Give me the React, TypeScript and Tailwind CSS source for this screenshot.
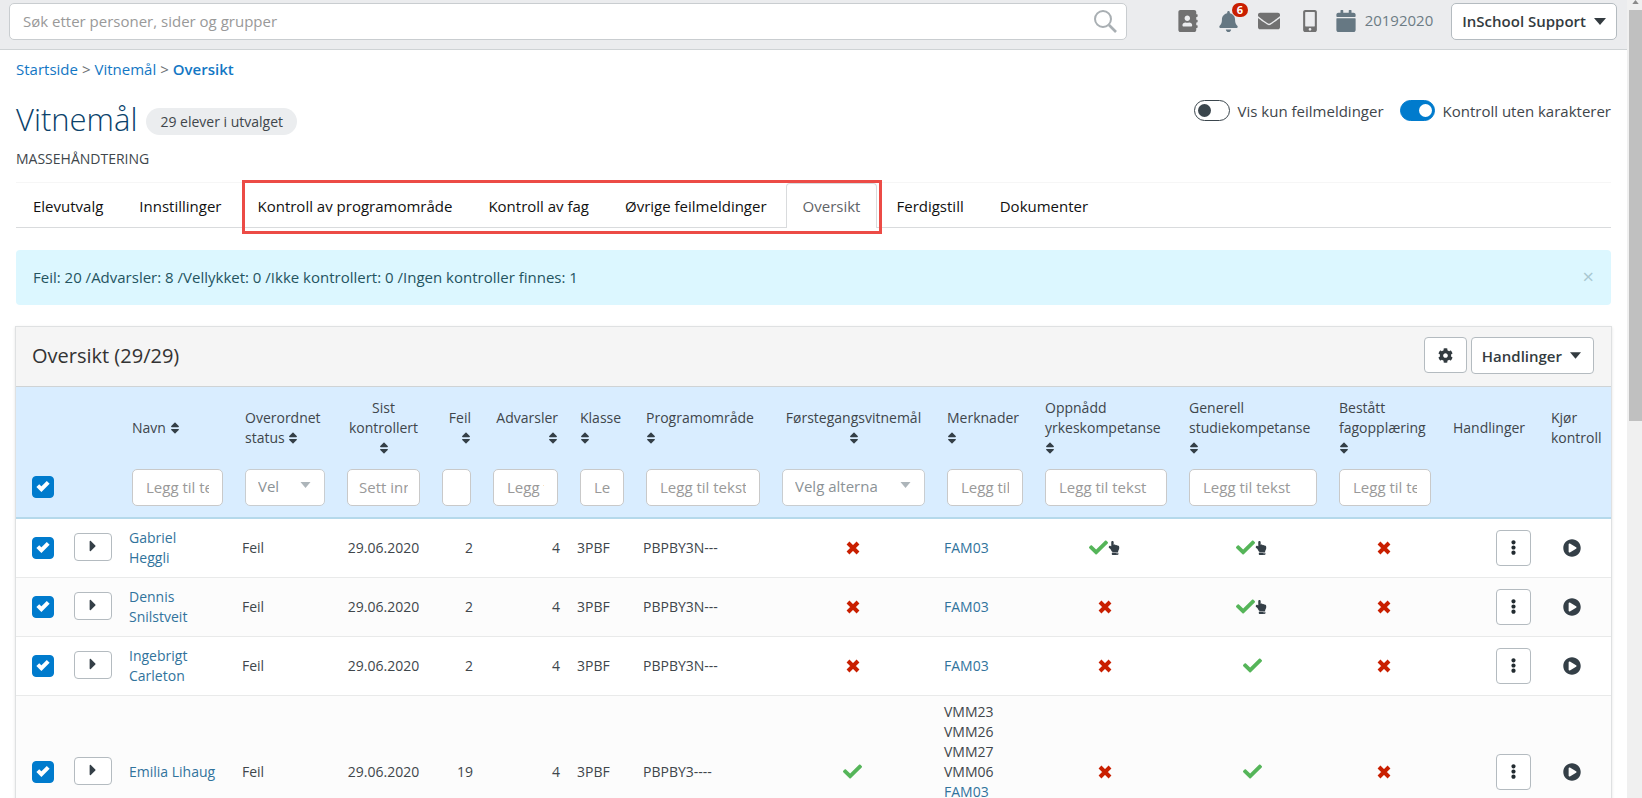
import { useState } from "react";
import type { ReactNode } from "react";
import {
  FaAddressBook,
  FaBell,
  FaCalendar,
  FaCaretRight,
  FaCheck,
  FaCog,
  FaEllipsisV,
  FaEnvelope,
  FaHandPointUp,
  FaMobileAlt,
  FaPlayCircle,
  FaSort,
} from "react-icons/fa";

type Mark = "no" | "yes" | "manual";
type Align = "left" | "center" | "right";

interface Pupil {
  name: string;
  errors: number;
  warnings: number;
  group: string;
  programme: string;
  first: Mark;
  notes: { code: string; link?: boolean }[];
  vocational: Mark;
  general: Mark;
  trade: Mark;
}

const pupils: Pupil[] = [
  { name: "Gabriel Heggli", errors: 2, warnings: 4, group: "3PBF", programme: "PBPBY3N---", first: "no", notes: [{ code: "FAM03", link: true }], vocational: "manual", general: "manual", trade: "no" },
  { name: "Dennis Snilstveit", errors: 2, warnings: 4, group: "3PBF", programme: "PBPBY3N---", first: "no", notes: [{ code: "FAM03", link: true }], vocational: "no", general: "manual", trade: "no" },
  { name: "Ingebrigt Carleton", errors: 2, warnings: 4, group: "3PBF", programme: "PBPBY3N---", first: "no", notes: [{ code: "FAM03", link: true }], vocational: "no", general: "yes", trade: "no" },
  {
    name: "Emilia Lihaug",
    errors: 19,
    warnings: 4,
    group: "3PBF",
    programme: "PBPBY3----",
    first: "yes",
    notes: [
      { code: "VMM23" },
      { code: "VMM26" },
      { code: "VMM27" },
      { code: "VMM06" },
      { code: "FAM03", link: true },
    ],
    vocational: "no",
    general: "yes",
    trade: "no",
  },
];

interface Column {
  label: string;
  width: string;
  align: Align;
  sort?: "inline" | "below";
  filter?: "text" | "select";
  hint?: string;
  pad?: string;
}

const columns: Column[] = [
  { label: "Navn", width: "w-[113px]", align: "left", sort: "inline", filter: "text", hint: "Legg til tekst", pad: "px-[13px]" },
  { label: "Overordnet status", width: "w-[102px]", align: "left", sort: "inline", filter: "select", hint: "Vel" },
  { label: "Sist kontrollert", width: "w-[95px]", align: "center", sort: "below", filter: "text", hint: "Sett inn", pad: "px-[11px]" },
  { label: "Feil", width: "w-[51px]", align: "right", sort: "below", filter: "text", hint: "", pad: "px-[13px]" },
  { label: "Advarsler", width: "w-[87px]", align: "right", sort: "below", filter: "text", hint: "Legg til", pad: "px-[13px]" },
  { label: "Klasse", width: "w-[66px]", align: "left", sort: "below", filter: "text", hint: "Legg", pad: "px-[13px]" },
  { label: "Programområde", width: "w-[136px]", align: "left", sort: "below", filter: "text", hint: "Legg til tekst", pad: "px-[13px]" },
  { label: "Førstegangsvitnemål", width: "w-[165px]", align: "center", sort: "below", filter: "select", hint: "Velg alterna" },
  { label: "Merknader", width: "w-[98px]", align: "left", sort: "below", filter: "text", hint: "Legg til", pad: "px-[13px]" },
  { label: "Oppnådd yrkeskompetanse", width: "w-[144px]", align: "left", sort: "below", filter: "text", hint: "Legg til tekst", pad: "px-[13px]" },
  { label: "Generell studiekompetanse", width: "w-[150px]", align: "left", sort: "below", filter: "text", hint: "Legg til tekst", pad: "px-[13px]" },
  { label: "Bestått fagopplæring", width: "w-[114px]", align: "left", sort: "below", filter: "text", hint: "Legg til tekst", pad: "px-[13px]" },
  { label: "Handlinger", width: "w-[98px]", align: "left" },
  { label: "Kjør kontroll", width: "w-[71px]", align: "left" },
];

const alignClass: Record<Align, string> = {
  left: "text-left",
  center: "text-center",
  right: "text-right",
};

function MarkIcon({ mark }: { mark: Mark }) {
  if (mark === "no") {
    return (
      <svg viewBox="0 0 14 14" role="img" aria-label="Nei" className="mx-auto size-[14px]">
        <path d="M2 2l10 10M12 2L2 12" stroke="#c91f00" strokeWidth="4" fill="none" />
      </svg>
    );
  }
  return (
    <span className="flex items-center justify-center">
      <FaCheck aria-label="Ja" className="size-[19px] text-[#55b559]" />
      {mark === "manual" && <FaHandPointUp aria-label="Manuelt satt" className="size-[14px] -ml-px text-[#343f47]" />}
    </span>
  );
}

function Tick({ label }: { label: string }) {
  const [on, setOn] = useState(true);
  return (
    <label className="relative ml-4 block size-[22px]">
      <input
        type="checkbox"
        aria-label={label}
        checked={on}
        onChange={() => setOn(!on)}
        className="peer block size-[22px] appearance-none rounded-sm border border-[#007bcd] bg-white checked:bg-[#007bcd]"
      />
      <svg viewBox="0 0 14 12" className="pointer-events-none absolute top-1 left-1 hidden h-3 w-[14px] peer-checked:block">
        <path d="M1.8 5.6l3.6 3.6L12.2 2.4" stroke="#fff" strokeWidth="4" fill="none" />
      </svg>
    </label>
  );
}

function Toggle({ label, initial }: { label: string; initial: boolean }) {
  const [on, setOn] = useState(initial);
  return (
    <label className="flex items-center gap-2">
      <input type="checkbox" role="switch" checked={on} onChange={() => setOn(!on)} className="peer sr-only" />
      <span
        className={
          on
            ? "flex h-[21px] w-[35px] items-center justify-end rounded-full border border-[#007bcd] bg-[#007bcd] px-[2px]"
            : "flex h-[21px] w-9 items-center rounded-full border border-[#3b464d] bg-white px-[3px]"
        }
      >
        <span className={on ? "size-[13px] rounded-full bg-white" : "size-[13px] rounded-full bg-[#3b464d]"} />
      </span>
      <span>{label}</span>
    </label>
  );
}

function Tab({ label, active }: { label: string; active?: boolean }) {
  return (
    <a
      href="#"
      className={
        active
          ? "-mb-px mr-[2px] flex h-[45px] items-center rounded-t border border-b-0 border-[#d9dbdd] bg-white px-4 text-[#5f6468]"
          : "mr-[2px] flex h-11 items-center border-x border-transparent px-4 pt-px text-[#111]"
      }
    >
      {label}
    </a>
  );
}

function Filter({ column }: { column: Column }) {
  if (column.filter === "select") {
    return (
      <span className="relative block">
        <select
          aria-label={column.label}
          className="block h-[37px] w-full appearance-none rounded-[5px] border border-[#c9cdd0] bg-white pr-10 pb-[3px] pl-3 text-[15px] text-[#8b9296]"
        >
          <option>{column.hint}</option>
        </select>
        <svg viewBox="0 0 10 6" className="pointer-events-none absolute top-[13px] right-[14px] h-[6px] w-[11px] text-[#adb5ba]">
          <path d="M0 0h10L5 6z" fill="currentColor" />
        </svg>
      </span>
    );
  }
  return (
    <input
      type="text"
      aria-label={column.label}
      placeholder={column.hint}
      className={`block h-[37px] w-full rounded-[5px] border border-[#c9c9c9] bg-white pb-[2px] text-[15px] placeholder:text-[#999] ${column.pad}`}
    />
  );
}

function HeaderIcon({ label, children }: { label: string; children: ReactNode }) {
  return (
    <button type="button" aria-label={label} className="relative flex items-center">
      {children}
    </button>
  );
}

export default function App() {
  return (
    <div className="flex h-screen overflow-hidden bg-white font-['Open_Sans',sans-serif] text-[14px] leading-5 text-[#40464b]">
      <div className="min-w-0 flex-1 overflow-hidden">
        <header className="flex h-[50px] items-start border-b border-[#cfd3d5] bg-[#ebecee] pt-[3px] pr-[10px] pl-[9px]">
          <div className="relative w-[1118px]">
            <input
              type="search"
              aria-label="Søk"
              placeholder="Søk etter personer, sider og grupper"
              className="block h-[37px] w-full rounded-[5px] border border-[#c9cdd0] bg-white pr-12 pb-[2px] pl-[13px] text-[15px] placeholder:text-[#999]"
            />
            <svg viewBox="0 0 24 24" fill="none" stroke="#a9afb3" strokeWidth="2" className="absolute top-[6px] right-[10px] size-6">
              <circle cx="10" cy="10" r="8" />
              <path d="M16 16l7 7" strokeWidth="2.6" />
            </svg>
          </div>
          <div className="flex h-9 flex-1 items-center justify-end text-[#717171]">
            <div className="flex items-center gap-[19px]">
              <HeaderIcon label="Kontakter">
                <FaAddressBook className="size-[22px]" />
              </HeaderIcon>
              <HeaderIcon label="Varsler">
                <FaBell className="size-[21px] text-[#667883]" />
                <span className="absolute -top-[8px] left-[14px] rounded-full bg-[#c91f00] px-[5px] text-[11px] leading-[14px] font-bold text-white">
                  6
                </span>
              </HeaderIcon>
              <HeaderIcon label="Meldinger">
                <FaEnvelope className="size-[22px]" />
              </HeaderIcon>
              <HeaderIcon label="Mobil">
                <FaMobileAlt className="size-[22px]" />
              </HeaderIcon>
            </div>
            <button type="button" className="ml-[14px] flex items-center gap-2 text-[15px] font-medium text-[#6d7c85]">
              <FaCalendar className="size-[22px] text-[#667883]" />
              <span className="pb-[2px]">20192020</span>
            </button>
          </div>
          <button
            type="button"
            className="ml-[18px] flex h-[37px] items-center gap-2 rounded-[5px] border border-[#b4bbc0] bg-white px-[10px] pb-px text-[15px] font-semibold text-[#333b40]"
          >
            InSchool Support
            <svg viewBox="0 0 12 7" className="h-[7px] w-3">
              <path d="M0 0h12L6 7z" fill="currentColor" />
            </svg>
          </button>
        </header>

        <main className="px-4">
          <nav aria-label="Brødsmuler" className="mt-[9px] flex gap-1 text-[15px] leading-5 text-[#1377c4]">
            <a href="#">Startside</a>
            <span className="text-[#6b7074]">&gt;</span>
            <a href="#">Vitnemål</a>
            <span className="text-[#6b7074]">&gt;</span>
            <a href="#" className="font-semibold">
              Oversikt
            </a>
          </nav>

          <div className="mt-5 flex items-start justify-between">
            <div className="flex items-center">
              <h1 className="text-[31px] leading-10 font-light text-[#0b426b]">Vitnemål</h1>
              <span className="mt-1 ml-[9px] rounded-full bg-[#ebedef] px-[14px] text-[14px] leading-[27px]">29 elever i utvalget</span>
            </div>
            <div className="mt-px flex items-center gap-4 text-[15px] leading-5">
              <Toggle label="Vis kun feilmeldinger" initial={false} />
              <Toggle label="Kontroll uten karakterer" initial />
            </div>
          </div>
          <p className="mt-[10px]">MASSEHÅNDTERING</p>

          <nav
            aria-label="Steg"
            className="mt-[13px] flex h-[46px] items-end border-t border-b border-t-[#f6f6f6] border-b-[#d9dbdd] text-[15px] leading-5"
          >
            <Tab label="Elevutvalg" />
            <Tab label="Innstillinger" />
            <div className="relative flex">
              <Tab label="Kontroll av programområde" />
              <Tab label="Kontroll av fag" />
              <Tab label="Øvrige feilmeldinger" />
              <Tab label="Oversikt" active />
              <div className="pointer-events-none absolute -top-[3px] -right-[3px] -bottom-[7px] left-[2px] border-[3px] border-[#ec4b46]" />
            </div>
            <Tab label="Ferdigstill" />
            <Tab label="Dokumenter" />
          </nav>

          <div
            role="status"
            className="mt-[22px] flex h-[55px] items-center justify-between rounded bg-[#dcf7ff] px-[17px] pb-[2px] text-[15px] leading-5 text-[#24545f]"
          >
            <span>Feil: 20 /Advarsler: 8 /Vellykket: 0 /Ikke kontrollert: 0 /Ingen kontroller finnes: 1</span>
            <button type="button" aria-label="Lukk" className="text-[20px] text-[#a9c8d1]">
              ×
            </button>
          </div>

          <section className="mt-[21px] -mx-px border border-[#dfe1e2] shadow-sm">
            <div className="flex h-[60px] items-center justify-between border-b border-[#cfd3d5] bg-[#f5f5f5] pr-[17px] pb-[2px] pl-4">
              <h2 className="text-[20px] text-[#333]">Oversikt (29/29)</h2>
              <div className="flex items-start gap-1">
                <button
                  type="button"
                  aria-label="Innstillinger"
                  className="flex h-9 w-[43px] items-center justify-center rounded border border-[#b4bbc0] bg-white text-[#333b40]"
                >
                  <FaCog className="size-[15px]" />
                </button>
                <button
                  type="button"
                  className="flex h-[37px] items-center gap-2 rounded border border-[#b4bbc0] bg-white pr-3 pl-[10px] text-[15px] font-semibold text-[#333b40]"
                >
                  Handlinger
                  <svg viewBox="0 0 12 7" className="h-[7px] w-[11px]">
                    <path d="M0 0h12L6 7z" fill="currentColor" />
                  </svg>
                </button>
              </div>
            </div>

            <table className="w-full table-fixed border-collapse">
              <colgroup>
                <col className="w-[51px]" />
                <col className="w-[54px]" />
                {columns.map((c) => (
                  <col key={c.label} className={c.width} />
                ))}
              </colgroup>
              <thead className="bg-[#d9edff]">
                <tr>
                  <td />
                  <td />
                  {columns.map((c) => (
                    <th key={c.label} scope="col" className={`px-[11px] py-[11px] align-middle font-normal ${alignClass[c.align]}`}>
                      {c.label}
                      {c.sort === "below" && <br />}
                      {c.sort === "inline" && " "}
                      {c.sort && <FaSort className="-mx-[2px] inline size-[14px] align-[-2px] text-[#343f47]" />}
                    </th>
                  ))}
                </tr>
                <tr className="border-b-2 border-[#b5d9eb]">
                  <td className="pb-3">
                    <Tick label="Velg alle" />
                  </td>
                  <td />
                  {columns.map((c) => (
                    <td key={c.label} className="px-[11px] pb-[11px]">
                      {c.filter && <Filter column={c} />}
                    </td>
                  ))}
                </tr>
              </thead>
              <tbody>
                {pupils.map((p) => (
                  <tr key={p.name} className="h-[59px] border-b border-[#e9eaea] even:bg-[#fcfcfc]">
                    <td>
                      <Tick label={`Velg ${p.name}`} />
                    </td>
                    <td className="px-[7px] pb-[2px]">
                      <button
                        type="button"
                        aria-label={`Vis detaljer for ${p.name}`}
                        className="flex h-7 w-[38px] items-center justify-center rounded-sm border border-[#b4bbc0] bg-white pb-[2px] text-[#343f47]"
                      >
                        <FaCaretRight className="size-[18px]" />
                      </button>
                    </td>
                    <td className="pr-4 pl-2">
                      <a href="#" className="text-[#31739c]">
                        {p.name}
                      </a>
                    </td>
                    <td className="px-2">Feil</td>
                    <td className="px-2 text-center">29.06.2020</td>
                    <td className="px-[9px] text-right">{p.errors}</td>
                    <td className="px-[9px] text-right">{p.warnings}</td>
                    <td className="px-2">{p.group}</td>
                    <td className="px-2">{p.programme}</td>
                    <td className="pr-[2px]">
                      <MarkIcon mark={p.first} />
                    </td>
                    <td className="px-2 py-[6px]">
                      <div className={p.notes.length > 1 ? "min-h-[140px]" : ""}>
                        {p.notes.map((n) =>
                          n.link ? (
                            <a key={n.code} href="#" className="block text-[#31739c]">
                              {n.code}
                            </a>
                          ) : (
                            <span key={n.code} className="block">
                              {n.code}
                            </span>
                          ),
                        )}
                      </div>
                    </td>
                    <td className="pr-[2px]">
                      <MarkIcon mark={p.vocational} />
                    </td>
                    <td className="pr-[2px]">
                      <MarkIcon mark={p.general} />
                    </td>
                    <td className="pr-[2px]">
                      <MarkIcon mark={p.trade} />
                    </td>
                    <td className="px-[9px]">
                      <button
                        type="button"
                        aria-label={`Handlinger for ${p.name}`}
                        className="ml-auto flex h-9 w-[35px] items-center justify-center rounded border border-[#b4bbc0] bg-white text-[#222b30]"
                      >
                        <FaEllipsisV className="size-[15px]" />
                      </button>
                    </td>
                    <td className="pr-4 pl-2">
                      <button type="button" aria-label={`Kjør kontroll for ${p.name}`} className="mx-auto block">
                        <FaPlayCircle className="size-[18px] text-[#343f47]" />
                      </button>
                    </td>
                  </tr>
                ))}
              </tbody>
            </table>
          </section>
        </main>
      </div>

      <div aria-hidden="true" className="flex w-[15px] flex-col items-end bg-[#f0f0f0]">
        <div className="flex h-[10px] w-[13px] justify-center">
          <svg viewBox="0 0 8 5" className="h-[4px] w-[7px]">
            <path d="M4 0L8 5H0z" fill="#8a8a8a" />
          </svg>
        </div>
        <div className="h-[51.5%] w-[13px] bg-[#c0c0c0]" />
      </div>
    </div>
  );
}
